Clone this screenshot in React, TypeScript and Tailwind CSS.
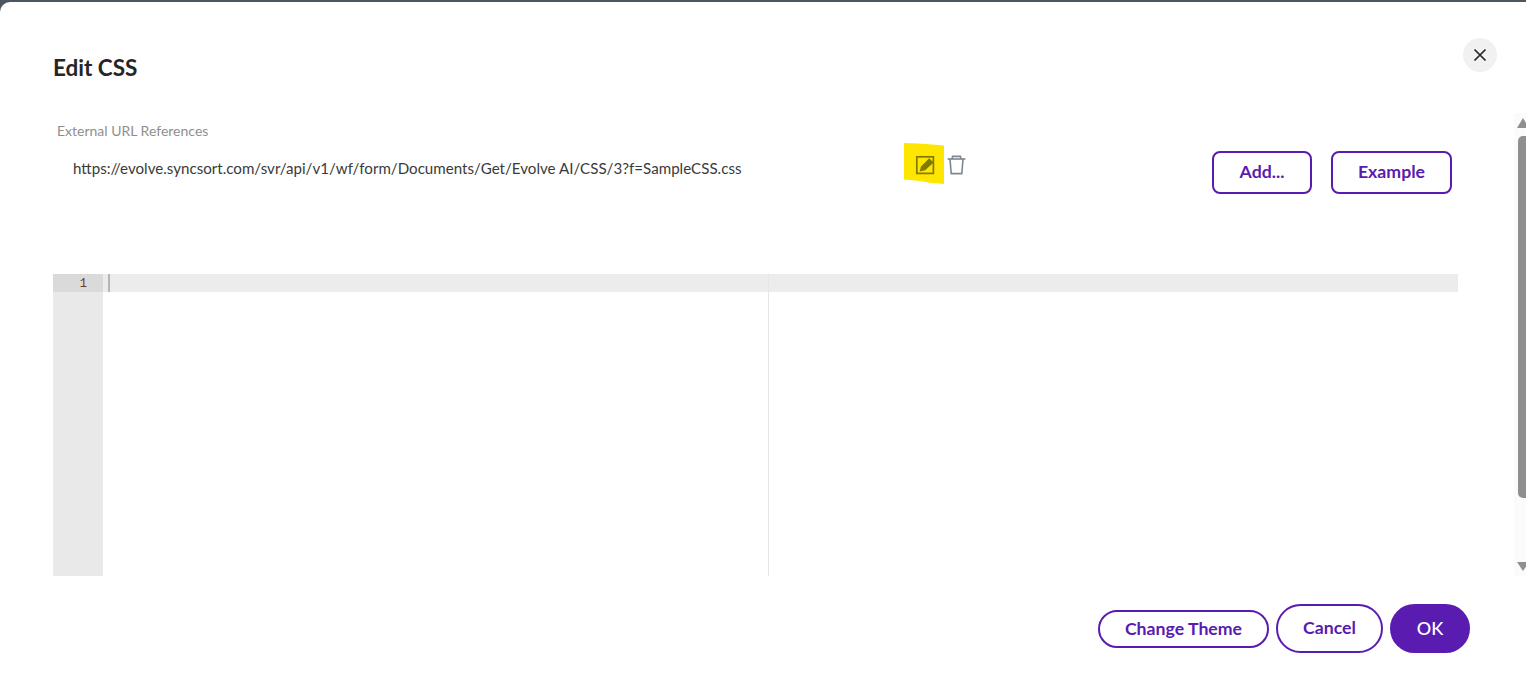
import React from "react";

const PURPLE = "border-2 border-[#5a1bb0] text-[#5a1bb0] font-bold bg-white";

function HighlightedEdit() {
  return (
    <svg width="40" height="41" viewBox="0 0 40 41" fill="none" className="shrink-0">
      <path d="M0 0 L14 0.6 L28 1.6 L40 2.6 L40 41 L26 39.8 L12 37.6 L0 36.6 Z" fill="#ffe600" />
      <rect x="12.8" y="13.8" width="16.6" height="16.6" fill="none" stroke="#7f7a00" strokeWidth="1.7" />
      <path d="M15.6 28.4 L17 23.4 L25.2 15.2 L29.6 19.4 L21.2 27.2 Z" fill="#7f7a00" />
    </svg>
  );
}

function Trash() {
  return (
    <svg width="19" height="20" viewBox="0 0 19 20" fill="none" stroke="#7d8790" strokeWidth="1.6" className="translate-y-[1px]">
      <path d="M0.6 4 H18.4" />
      <path d="M5 4 L5.6 1.4 H13.4 L14 4" />
      <path d="M3 4 L4.2 18.6 H14.8 L16 4" />
    </svg>
  );
}

export default function App() {
  return (
    <div className="h-[697px] w-full overflow-hidden bg-[#4c5660] pt-[2px] font-['Lato','Liberation_Sans',sans-serif]">
      <div className="relative flex h-[695px] flex-col rounded-tl-[10px] bg-white">
        <div className="flex h-[119px] items-start justify-between pl-[53px] pr-[29px]">
          <h2 className="mt-[50px] text-[22.5px] leading-[32px] font-bold text-[#252525]">Edit CSS</h2>
          <button className="mt-[36px] flex h-[34px] w-[34px] items-center justify-center rounded-full bg-[#f1f1f1] text-[#252525]">
            <svg width="14" height="14" viewBox="0 0 14 14" stroke="#252525" strokeWidth="1.7" fill="none">
              <path d="M1.5 1.5 L12.5 12.5 M12.5 1.5 L1.5 12.5" />
            </svg>
          </button>
        </div>

        <div className="flex h-[153px] items-start pl-[53px] pr-[74px]">
          <div className="flex-1">
            <div className="pl-[4px] text-[14px] leading-[20px] text-[#8f8f8f]">External URL References</div>
            <div className="mt-[14px] flex h-[26px] items-center pl-[20px]">
              <span className="w-[831px] text-[15.14px] leading-[22px] whitespace-nowrap text-[#3a3a3a]">
                https://evolve.syncsort.com/svr/api/v1/wf/form/Documents/Get/Evolve AI/CSS/3?f=SampleCSS.css
              </span>
              <div className="-mt-[9px] flex items-center gap-[3px]">
                <HighlightedEdit />
                <Trash />
              </div>
            </div>
          </div>
          <div className="mt-[30px] flex gap-[19px]">
            <button className={`${PURPLE} h-[43px] w-[100px] rounded-[8px] text-[17.7px]`}>Add...</button>
            <button className={`${PURPLE} h-[43px] w-[121px] rounded-[8px] text-[17.7px]`}>Example</button>
          </div>
        </div>

        <div className="ml-[53px] flex h-[302px] w-[1405px]">
          <div className="w-[50px] bg-[#e9e9e9]">
            <div className="h-[18px] bg-[#dadada] pt-[1px] pr-[16px] text-right font-['Liberation_Mono',monospace] text-[12px] leading-[18px] text-[#6b3324]">
              1
            </div>
          </div>
          <div className="relative flex-1">
            <div className="h-[18px] bg-[#ececec]">
              <div className="ml-[5px] h-[18px] w-[2px] bg-[#b5b5b5]" />
            </div>
            <div className="absolute top-0 left-[665px] h-full w-px bg-[#e6e6e6]" />
          </div>
        </div>

        <div className="flex flex-1 items-start justify-end gap-[7px] pt-[28px] pr-[56px]">
          <button className={`${PURPLE} mt-[6px] h-[38px] w-[171px] rounded-full text-[17.7px]`}>Change Theme</button>
          <button className={`${PURPLE} h-[49px] w-[107px] rounded-full text-[17.7px]`}>Cancel</button>
          <button className="h-[49px] w-[80px] rounded-full bg-[#5a1bb0] text-[18px] font-medium text-white">OK</button>
        </div>

        <div className="absolute top-[111px] right-0 flex h-[463px] w-[12px] flex-col items-start overflow-hidden bg-[#fbfbfb]">
          <div className="mt-[5px] ml-[3px] h-0 w-0 shrink-0 border-x-[6px] border-b-[10px] border-x-transparent border-b-[#8f8f8f]" />
          <div className="mt-[8px] ml-[4px] h-[362px] w-[8px] shrink-0 rounded-l-[5px] bg-[#8f8f8f]" />
          <div className="mt-[64px] ml-[3px] h-0 w-0 shrink-0 border-x-[6px] border-t-[9px] border-x-transparent border-t-[#8f8f8f]" />
        </div>
      </div>
    </div>
  );
}
